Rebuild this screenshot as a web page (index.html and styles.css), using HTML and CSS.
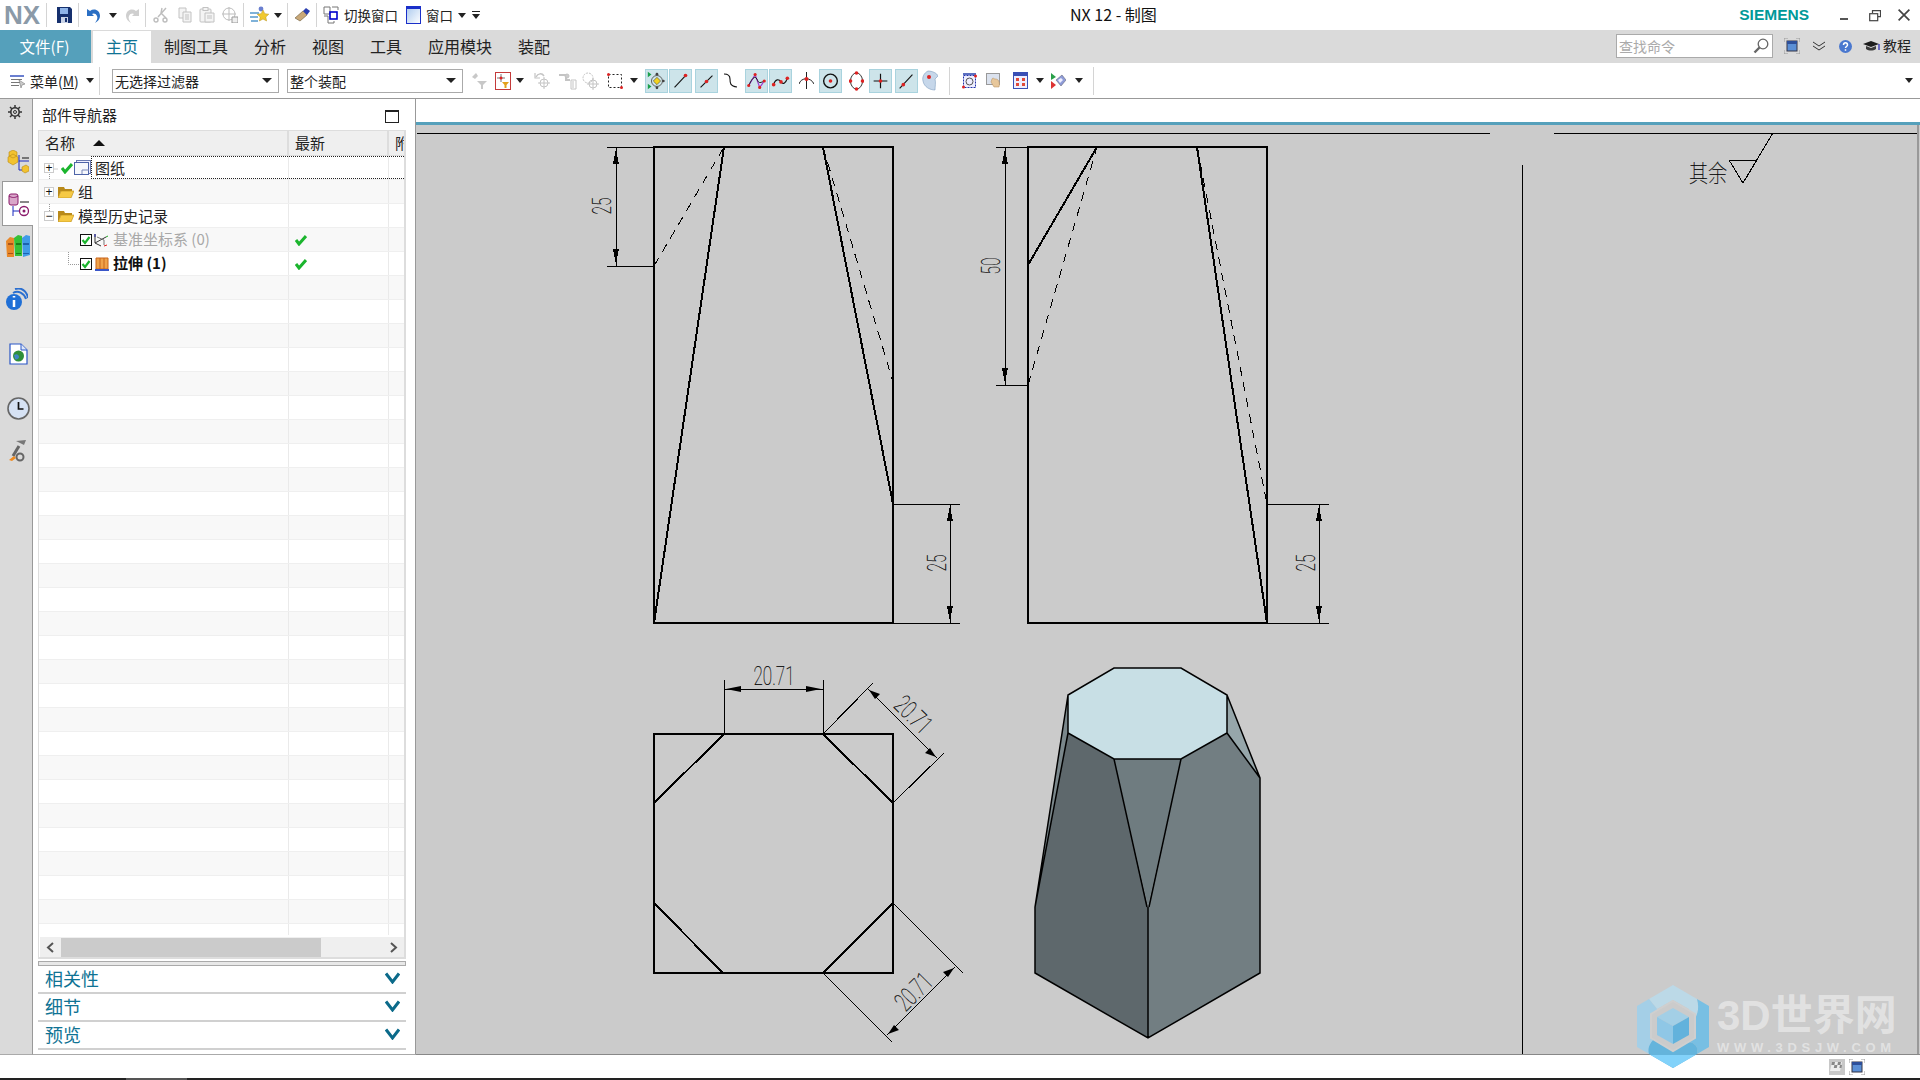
FILE: index.html
```html
<!DOCTYPE html>
<html lang="zh-CN">
<head>
<meta charset="utf-8">
<title>NX 12 - 制图</title>
<link rel="stylesheet" href="styles.css">
</head>
<body>
<div class="app">
  <header class="titlebar">
    <span class="nx-logo">NX</span>
    <i class="sep m6"></i>
    <svg class="ic m10" width="15" height="16" viewBox="0 0 15 16"><path d="M0 0h13l2 2v14H0z" fill="#16306e"/><path d="M3 1h8v6H3z" fill="#8fb4e8"/><path d="M4 10h7v6H4z" fill="#c9d3e6"/><path d="M8 11h2v4H8z" fill="#16306e"/></svg>
    <i class="sep m6"></i>
    <svg class="ic m8" width="14" height="15" viewBox="0 0 14 15"><path d="M3 3 C7 0 13 2 13 8 C13 11 11 13 8 15 C10 12 11 10 10 8 C9 5 6 5 5 6 L7 8 H0 V1 Z" fill="#2a6fc4"/></svg>
    <i class="caret m8"></i>
    <svg class="ic m8" width="14" height="15" viewBox="0 0 14 15"><path d="M11 3 C7 0 1 2 1 8 C1 11 3 13 6 15 C4 12 3 10 4 8 C5 5 8 5 9 6 L7 8 H14 V1 Z" fill="#cfcfcf"/></svg>
    <i class="sep m6"></i>
    <svg class="ic m7" width="15" height="16" viewBox="0 0 15 16" fill="none" stroke="#bdbdbd" stroke-width="1.4"><path d="M13 1 5 10M9 1l-1 5 5 5"/><circle cx="3" cy="13" r="2"/><circle cx="12" cy="13" r="2" /></svg>
    <svg class="ic m10" width="14" height="16" viewBox="0 0 14 16" fill="#f4f4f4" stroke="#c2c2c2"><path d="M1 1h7v10H1z"/><path d="M5 5h8v10H5z"/><path d="M7 8h4M7 10h4M7 12h4"/></svg>
    <svg class="ic m7" width="16" height="16" viewBox="0 0 16 16" fill="#f4f4f4" stroke="#c2c2c2"><rect x="1" y="2" width="11" height="13" rx="1"/><rect x="4" y="0.5" width="5" height="3"/><path d="M6 6h9v9H6z"/><path d="M8 9h5M8 11h5"/></svg>
    <svg class="ic m7" width="16" height="16" viewBox="0 0 16 16" fill="none" stroke="#bdbdbd"><circle cx="7" cy="7" r="6"/><path d="M7 0v14M0 7h14"/><path d="M10 10h6v6h-6z" fill="#eee" stroke="#999"/></svg>
    <i class="sep m5"></i>
    <svg class="ic m6" width="19" height="18" viewBox="0 0 19 18"><circle cx="11" cy="3" r="2.4" fill="#6a7fd0"/><path d="M0 6h9v2H0zM0 10h8v2H0zM1 14h7v2H1z" fill="#7fb2d9"/><path d="M13 4l1.8 3.7 4 .5-3 2.8.8 4-3.6-2-3.6 2 .8-4-3-2.8 4-.5z" fill="#f1c92f" stroke="#b9951c" stroke-width=".5"/></svg>
    <i class="caret m5"></i>
    <i class="sep m5"></i>
    <svg class="ic m6" width="16" height="14" viewBox="0 0 16 14"><path d="M1 10 9 3l4 4-7 6z" fill="#c9a878" stroke="#6b5a3a" stroke-width=".6"/><path d="M9 3l3-3 4 3-3 4z" fill="#2b3fb0"/></svg>
    <i class="sep m6"></i>
    <svg class="ic m6" width="18" height="18" viewBox="0 0 18 18" fill="none"><path d="M1 1h6v7H1zM9 1h6v3M1 10h4v7h6v-2" stroke="#777"/><rect x="7" y="6" width="7" height="7" stroke="#00c" stroke-width="1.6" fill="#fff"/></svg>
    <span class="qa-label m3">切换窗口</span>
    <svg class="ic m8" width="15" height="18" viewBox="0 0 15 18"><defs><linearGradient id="winfill" x1="0" y1="0" x2="1" y2="1"><stop offset="0" stop-color="#a9c8ee"/><stop offset="1" stop-color="#fff"/></linearGradient></defs><rect x=".5" y=".5" width="14" height="17" fill="url(#winfill)" stroke="#1a2fc9"/><path d="M1 1h13v2H1z" fill="#1a2fc9"/></svg>
    <span class="qa-label m5">窗口</span>
    <i class="caret m5"></i>
    <svg class="ic m6" width="8" height="8" viewBox="0 0 8 8"><path d="M0 0h8v1H0zM0 3h8L4 8z" fill="#222"/></svg>
    <span class="app-title">NX 12 - 制图</span>
    <span class="siemens">SIEMENS</span>
    <svg class="ic win-min" width="9" height="3" viewBox="0 0 9 3"><path d="M0 0h8v2H0z" fill="#555"/></svg>
    <svg class="ic win-res" width="12" height="12" viewBox="0 0 12 12" fill="none" stroke="#444" stroke-width="1.2"><path d="M3.5 3V.7h8v6H9"/><rect x=".7" y="3.7" width="8" height="7"/></svg>
    <svg class="ic win-close" width="12" height="12" viewBox="0 0 12 12" stroke="#444" stroke-width="1.7"><path d="M.6.6l10.8 10.8M11.4.6.6 11.4"/></svg>
  </header>

  <nav class="tabs">
    <a class="tab tab-file">文件(F)</a>
    <a class="tab tab-active">主页</a>
    <a class="tab">制图工具</a>
    <a class="tab">分析</a>
    <a class="tab">视图</a>
    <a class="tab">工具</a>
    <a class="tab">应用模块</a>
    <a class="tab">装配</a>
    <div class="tabs-right">
      <div class="search"><span>查找命令</span>
        <svg width="16" height="16" viewBox="0 0 16 16" fill="none" stroke="#666"><circle cx="10" cy="6" r="4.8" stroke-width="1.3"/><path d="M6.5 9.5 1.5 14.5" stroke-width="2.4"/></svg>
      </div>
      <svg class="m11" width="16" height="16" viewBox="0 0 16 16" fill="none"><path d="M0 4V0h4M12 0h4v4M16 12v4h-4M4 16H0v-4" stroke="#999"/><rect x="3" y="3" width="10" height="10" fill="#5b8fd6" stroke="#334"/><path d="M3 3h10v3H3z" fill="#2d4f9a"/></svg>
      <svg class="m12" width="14" height="10" viewBox="0 0 14 10" fill="none" stroke="#333" stroke-width="1"><path d="M1 1l6 4 6-4M1 5l6 4 6-4"/></svg>
      <svg class="m13" width="13" height="13" viewBox="0 0 13 13"><circle cx="6.5" cy="6.5" r="6.5" fill="#4a78cf"/><path d="M4.5 5c0-3 4-3 4 0 0 1.500-2 1.500-2 3M6.500 9.300v1.500" stroke="#fff" stroke-width="1.500" fill="none"/></svg>
      <svg class="m11" width="17" height="12" viewBox="0 0 17 12"><path d="M0 4l8-3 8 3-8 3z" fill="#1c1c1c"/><path d="M3 6v3c3 2 7 2 10 0V6L8 8z" fill="#3a3a3a"/><path d="M16 4v6" stroke="#00a" stroke-width="1"/></svg>
      <span class="tutorial">教程</span>
    </div>
  </nav>

  <section class="toolbar">
    <svg class="ic m10" width="16" height="14" viewBox="0 0 16 14"><path d="M0 1h14v2H0z" fill="#6a7fd0"/><path d="M1 5h11v1H1zM1 8h9v1H1zM1 11h8v1H1z" fill="#777"/><path d="M9 6l6 4-3 1-1 3z" fill="#ccc" stroke="#666" stroke-width=".5"/></svg>
    <span class="menu-label m4">菜单(<u>M</u>)</span>
    <i class="caret m4"></i>
    <i class="sep sep-tall m5"></i>
    <div class="select select-a m12"><span>无选择过滤器</span><i class="caret caret-lg"></i></div>
    <div class="select select-b m8"><span>整个装配</span><i class="caret caret-lg"></i></div>
    <svg class="ic m8" width="17" height="18" viewBox="0 0 17 18" fill="#c8c8c8"><path d="M1 5l4-4 2 3-3 3z"/><path d="M6 9h10l-4 4v4h-2v-4z"/></svg>
    <svg class="ic m7" width="16" height="18" viewBox="0 0 16 18" fill="none"><rect x=".5" y=".5" width="15" height="17" stroke="#c43a3a" fill="#fff"/><path d="M6 2v8M2 6h8" stroke="#777"/><circle cx="6" cy="6" r="1.500" fill="#d22"/><path d="M7 10h7l-2.500 3v3h-2v-3z" fill="#e3a11a"/></svg>
    <i class="caret m5"></i>
    <svg class="ic m9" width="20" height="18" viewBox="0 0 20 18" fill="none" stroke="#c4c4c4"><path d="M3 5c2-4 6-4 8-1" stroke-width="1.500"/><path d="M2 1v5h5" stroke-width="1.200"/><circle cx="11" cy="11" r="4"/><path d="M11 5v12M5 11h12"/></svg>
    <svg class="ic m5" width="20" height="18" viewBox="0 0 20 18" fill="none" stroke="#c4c4c4"><path d="M1 3h7v5h4" stroke-width="2"/><circle cx="9" cy="4" r="2" fill="#ccc"/><path d="M13 8h5v9h-5zM15 9v7"/></svg>
    <svg class="ic m4" width="18" height="18" viewBox="0 0 18 18" fill="none" stroke="#c4c4c4"><circle cx="6" cy="6" r="5" stroke-dasharray="2 1"/><circle cx="11" cy="12" r="4"/><path d="M11 6v12M5 12h12"/></svg>
    <svg class="ic m7" width="16" height="18" viewBox="0 0 16 18" fill="none"><rect x="1.500" y="2.500" width="13" height="13" stroke="#222" stroke-dasharray="2 2"/><circle cx="1.500" cy="2.500" r="1.500" fill="#d22"/><circle cx="14.500" cy="15.500" r="1.500" fill="#d22"/></svg>
    <i class="caret m7"></i>
    <svg class="ic on m7" width="23" height="24" viewBox="0 0 23 24" fill="none"><path d="M2 2l4 3-4 3zM2 15l4 3-4 3z" fill="#1aa04a"/><circle cx="12" cy="12" r="6" stroke="#555"/><path d="M12 8l4 4-4 4-4-4z" fill="#f2d21f" stroke="#333" stroke-width=".6"/><circle cx="12" cy="4.500" r="1.500" fill="#444"/><circle cx="12" cy="19.500" r="1.500" fill="#444"/><circle cx="19" cy="12" r="1.500" fill="#444"/></svg>
    <svg class="ic on m1" width="23" height="24" viewBox="0 0 23 24" fill="none"><path d="M5 19 17 6" stroke="#111" stroke-width="1.200"/><circle cx="17" cy="6" r="2" fill="#d22"/></svg>
    <svg class="ic on m3" width="23" height="24" viewBox="0 0 23 24" fill="none"><path d="M5 19 18 6" stroke="#111" stroke-width="1.200"/><circle cx="11.500" cy="12.500" r="2" fill="#d22"/></svg>
    <svg class="ic m5" width="15" height="24" viewBox="0 0 15 24" fill="none"><path d="M1 5c4 0 6 1 6 5s0 7 7 8" stroke="#111" stroke-width="1.100"/></svg>
    <svg class="ic on m7" width="23" height="24" viewBox="0 0 23 24" fill="none"><path d="M3 17l7-12 5 14 5-7" stroke="#a23ad0" stroke-width="1.300"/><path d="M3 17C7 8 10 6 12 10s2 5 8 2" stroke="#111"/><circle cx="3" cy="17" r="1.700" fill="#d22"/><circle cx="10" cy="5" r="1.700" fill="#d22"/><circle cx="15" cy="19" r="1.700" fill="#d22"/><circle cx="20" cy="12" r="1.700" fill="#d22"/></svg>
    <svg class="ic on m1" width="23" height="24" viewBox="0 0 23 24" fill="none"><path d="M4 16c2-7 6-6 8-3s5 2 7-4" stroke="#111" stroke-width="1.200"/><circle cx="4" cy="16" r="2" fill="#d22"/><circle cx="12" cy="13" r="2" fill="#d22"/><circle cx="19" cy="9" r="2" fill="#d22"/></svg>
    <svg class="ic m7" width="15" height="24" viewBox="0 0 15 24" fill="none"><path d="M7.500 3v17" stroke="#222"/><path d="M0 15C2 8 12 8 15 15" stroke="#222"/><circle cx="7.500" cy="10" r="2" fill="#d22"/></svg>
    <svg class="ic on m5" width="23" height="24" viewBox="0 0 23 24" fill="none"><circle cx="11.500" cy="12" r="7.500" stroke="#111" stroke-width="1.500"/><circle cx="11.500" cy="12" r="2" fill="#d22"/></svg>
    <svg class="ic m7" width="15" height="24" viewBox="0 0 15 24" fill="none"><ellipse cx="7.500" cy="12" rx="6" ry="8" stroke="#333"/><circle cx="7.500" cy="4" r="1.800" fill="#d22"/><circle cx="7.500" cy="20" r="1.800" fill="#d22"/><circle cx="1.500" cy="12" r="1.800" fill="#d22"/><circle cx="13.500" cy="12" r="1.800" fill="#d22"/></svg>
    <svg class="ic on m5" width="23" height="24" viewBox="0 0 23 24" fill="none"><path d="M11.500 4v16M4 12h15" stroke="#111" stroke-width="1.300"/><circle cx="11.500" cy="12" r="2" fill="#d22"/></svg>
    <svg class="ic on m3" width="23" height="24" viewBox="0 0 23 24" fill="none"><path d="M4 20 18 5" stroke="#111" stroke-width="1.200"/><circle cx="8" cy="16" r="2" fill="#d22"/></svg>
    <svg class="ic m4" width="16" height="24" viewBox="0 0 16 24"><path d="M6 2c4 0 9 2 10 5l-3 3c1 4 0 7 0 11C8 21 2 18 1 12 0 8 2 4 6 2z" fill="#c6d7ea" stroke="#7f9dc0" stroke-width=".6"/><circle cx="7" cy="8" r="2" fill="#d22"/></svg>
    <i class="sep sep-tall m11"></i>
    <svg class="ic m12" width="15" height="17" viewBox="0 0 15 17" fill="none"><path d="M1 1h13v2H1z" fill="#5b6fc0"/><rect x="1.500" y="3.500" width="12" height="12" stroke="#2233aa" stroke-dasharray="2 1" fill="#eef"/><circle cx="7.500" cy="9.500" r="3.500" stroke="#555"/><circle cx="1.500" cy="15" r="1.500" fill="#d22"/><circle cx="13.500" cy="4" r="1.500" fill="#d22"/></svg>
    <svg class="ic m9" width="15" height="17" viewBox="0 0 15 17"><rect x=".5" y="1.500" width="13" height="11" fill="#dbe2ee" stroke="#999"/><path d="M6 7c1-2 2 0 3 0s2 0 3 1 2 4 1 7H8L5 10z" fill="#e7c79b" stroke="#b08a5a" stroke-width=".5"/></svg>
    <svg class="ic m12" width="15" height="17" viewBox="0 0 15 17"><rect x=".5" y=".5" width="14" height="16" fill="#eef" stroke="#3a4fb5"/><path d="M1 1h13v3H1z" fill="#3a4fb5"/><path d="M3 6h3v3H3zM9 6h3v3H9zM3 11h3v3H3zM9 11h3v3H9z" fill="#e04a3a"/></svg>
    <i class="caret m8"></i>
    <svg class="ic m7" width="15" height="17" viewBox="0 0 15 17"><path d="M0 1l5 4-5 3z" fill="#2aa04a"/><path d="M0 9l5 4-5 4z" fill="#d33"/><path d="M5 8l6-5 4 5-5 6z" fill="#8e9cd8" stroke="#556" stroke-width=".5"/><path d="M7 8l3-2 2 2-3 3z" fill="#eef"/></svg>
    <i class="caret m9"></i>
    <i class="sep sep-tall m10"></i>
    <i class="caret caret-end"></i>
  </section>

  <main class="workspace">
    <aside class="rail">
      <svg class="rail-gear" width="14" height="14" viewBox="0 0 14 14" fill="none" stroke="#333"><circle cx="7" cy="7" r="4.200" stroke-width="1.600"/><circle cx="7" cy="7" r="1.500"/><path d="M7 0v2.500M7 11.500V14M0 7h2.500M11.500 7H14M2 2l1.800 1.800M10.200 10.200 12 12M2 12l1.800-1.800M10.200 3.800 12 2" stroke-width="1.500"/></svg>
      <svg class="rail-parts" width="22" height="24" viewBox="0 0 22 24" fill="none"><path d="M1 7l5-3 5 3v5l-5 3-5-3zM6 0l4 2v4L6 8 2 6V2z" fill="#f2c230" stroke="#b98a16" stroke-width=".6"/><path d="M12 5v15M12 11h10M12 20h4" stroke="#1a2abf"/><path d="M15 8h7" stroke="#111"/><path d="M15 17l4-2 3 2v4l-4 2-3-2z" fill="#f2c230" stroke="#b98a16" stroke-width=".6"/></svg>
      <div class="rail-tab">
        <svg width="22" height="24" viewBox="0 0 22 24" fill="none"><rect x="1" y="1" width="9" height="11" rx="2" fill="#d9a6c9" stroke="#8a1a6b"/><path d="M1 3c3 2 6 2 9 0" stroke="#8a1a6b"/><path d="M12 9h9" stroke="#111"/><path d="M5 13v10M5 18h7" stroke="#1a2abf"/><circle cx="16" cy="18" r="4.500" stroke="#8a1a6b" stroke-width="1.300"/><circle cx="16" cy="18" r="1.500" fill="#8a1a6b"/></svg>
      </div>
      <svg class="rail-books" width="24" height="23" viewBox="0 0 24 23"><path d="M0 6l4-4 4 1v19H1z" fill="#e8882a"/><path d="M2 8h5v2H2zM2 18h5v1H2z" fill="#a8541a"/><path d="M8 3l4-3 4 1v20H9z" fill="#35c035"/><path d="M10 8h5v2h-5zM10 18h5v1h-5z" fill="#1a7f1a"/><path d="M16 3l4-3 4 1v19l-7 2z" fill="#3f9be8"/><path d="M17 8h6v2h-6zM17 18h6v1h-6z" fill="#1c62b0"/></svg>
      <svg class="rail-info" width="22" height="24" viewBox="0 0 22 24" fill="none"><path d="M7 5c5-3 11 0 13 6M9 1c6-2 12 2 13 9" stroke="#2a6fd0" stroke-width="2"/><circle cx="8" cy="14" r="8" fill="#1f6fd6"/><path d="M8 8v1.500M8 12v7" stroke="#fff" stroke-width="2.500"/></svg>
      <svg class="rail-doc" width="19" height="22" viewBox="0 0 19 22"><path d="M1 1h11l6 6v14H1z" fill="#fff" stroke="#2a56c6" stroke-width="1.200"/><path d="M12 1v6h6" fill="#dfe8f8" stroke="#2a56c6"/><circle cx="9.500" cy="13" r="5.500" fill="#2f8f3a"/><path d="M5 12c3-2 5 0 5 2s-3 3-4 2" fill="#3f86c6"/></svg>
      <svg class="rail-clock" width="23" height="23" viewBox="0 0 23 23" fill="none"><circle cx="11.500" cy="11.500" r="10.500" fill="#d6e2f4" stroke="#666" stroke-width="1.600"/><path d="M11.500 5v7h5" stroke="#111" stroke-width="1.700"/></svg>
      <svg class="rail-tools" width="20" height="24" viewBox="0 0 20 24" fill="none"><path d="M11 8 5 18" stroke="#666" stroke-width="3"/><path d="M8 3l10-1-2 5z" fill="#777"/><circle cx="12" cy="19" r="3.500" stroke="#666" stroke-width="2"/><path d="M1 22l5-4 2 2-4 3z" fill="#ef8a1f"/></svg>
    </aside>

    <div class="panel">
      <div class="panel-head"><span>部件导航器</span><i class="maximize"></i></div>
      <div class="table">
        <div class="thead">
          <div class="th"><span>名称</span><i class="sort"></i></div>
          <div class="th">最新</div>
          <div class="th th-clip">附</div>
        </div>
        <div class="tbody">
          <svg class="tree-lines" width="60" height="115" viewBox="0 0 60 115" fill="none" stroke="#999" stroke-dasharray="1 1"><path d="M10.500 18V62M10.500 13H19M29.500 72V108.500H40M29.500 84.500H40"/></svg>
          <div class="row row-top">
            <i class="box m5">+</i>
            <svg class="m7" width="12" height="12" viewBox="0 0 12 12"><path d="M1 6l3 4 7-8" fill="none" stroke="#1bb52e" stroke-width="3"/></svg>
            <svg class="m1" width="17" height="15" viewBox="0 0 17 15"><rect x="2.500" y=".5" width="14" height="13" fill="#eef" stroke="#6a7ab0"/><rect x=".5" y="2.500" width="14" height="12" fill="#f6f8fc" stroke="#4e64a8"/><path d="M8 14v-4h7" stroke="#7a88b8" fill="none"/></svg>
            <span class="focus">图纸</span>
          </div>
          <div class="row">
            <i class="box m5">+</i>
            <svg class="m4 folder" width="16" height="12" viewBox="0 0 16 12"><path d="M0 1h6l1 2h7v2H3l-3 7z" fill="#b98a1a"/><path d="M3 5h13l-3 7H0z" fill="#f6c945" stroke="#b98a1a" stroke-width=".6"/></svg>
            <span class="cell-text m4">组</span>
          </div>
          <div class="row">
            <i class="box m5">−</i>
            <svg class="m4 folder" width="16" height="12" viewBox="0 0 16 12"><path d="M0 1h6l1 2h7v2H3l-3 7z" fill="#b98a1a"/><path d="M3 5h13l-3 7H0z" fill="#f6c945" stroke="#b98a1a" stroke-width=".6"/></svg>
            <span class="cell-text m4">模型历史记录</span>
          </div>
          <div class="row">
            <svg class="check-box" width="12" height="12" viewBox="0 0 12 12"><rect x=".5" y=".5" width="11" height="11" fill="#fff" stroke="#111"/><path d="M2.500 6l2.500 3 4.500-6" fill="none" stroke="#1bb52e" stroke-width="2.200"/></svg>
            <svg class="m2" width="15" height="15" viewBox="0 0 15 15" fill="none"><path d="M1 2v9l6 3M1 11l11-6" stroke="#333"/><path d="M1 2l0 3" stroke="#22a"/><path d="M10 14l3-1" stroke="#d22"/><path d="M12 5l2-1" stroke="#2a2"/><path d="M3 5l7 3v5" stroke="#777"/></svg>
            <span class="cell-text m4 dim">基准坐标系 (0)</span>
            <svg class="latest" width="12" height="12" viewBox="0 0 12 12"><path d="M1 6l3 4 7-8" fill="none" stroke="#1bb52e" stroke-width="3"/></svg>
          </div>
          <div class="row">
            <svg class="check-box" width="12" height="12" viewBox="0 0 12 12"><rect x=".5" y=".5" width="11" height="11" fill="#fff" stroke="#111"/><path d="M2.500 6l2.500 3 4.500-6" fill="none" stroke="#1bb52e" stroke-width="2.200"/></svg>
            <svg class="m3" width="14" height="14" viewBox="0 0 14 14"><path d="M1 1h12v11H1z" fill="#f0a24a" stroke="#c8641a"/><path d="M5 1v11M9 1v11" stroke="#c8641a"/><path d="M0 12h14v2H0z" fill="#3a56c8"/></svg>
            <span class="cell-text m4 strong">拉伸 (1)</span>
            <svg class="latest" width="12" height="12" viewBox="0 0 12 12"><path d="M1 6l3 4 7-8" fill="none" stroke="#1bb52e" stroke-width="3"/></svg>
          </div>
          <div class="row"></div><div class="row"></div><div class="row"></div><div class="row"></div><div class="row"></div><div class="row"></div><div class="row"></div>
          <div class="row"></div><div class="row"></div><div class="row"></div><div class="row"></div><div class="row"></div><div class="row"></div><div class="row"></div>
          <div class="row"></div><div class="row"></div><div class="row"></div><div class="row"></div><div class="row"></div><div class="row"></div><div class="row"></div>
          <div class="row"></div><div class="row"></div><div class="row"></div><div class="row"></div><div class="row"></div><div class="row"></div><div class="row"></div>
        </div>
        <div class="hscroll">
          <svg width="21" height="19" viewBox="0 0 21 19" fill="none" stroke="#555" stroke-width="2"><path d="M13 5 8 9.500 13 14"/></svg>
          <div class="thumb"></div>
          <svg class="scroll-next" width="21" height="19" viewBox="0 0 21 19" fill="none" stroke="#555" stroke-width="2"><path d="M8 5l5 4.500L8 14"/></svg>
        </div>
      </div>
      <div class="splitter"></div>
      <div class="acc"><span>相关性</span><svg width="15" height="12" viewBox="0 0 15 12" fill="none" stroke="#0b6a8a" stroke-width="3"><path d="M1 1.500 7.500 10 14 1.500"/></svg></div>
      <div class="acc"><span>细节</span><svg width="15" height="12" viewBox="0 0 15 12" fill="none" stroke="#0b6a8a" stroke-width="3"><path d="M1 1.500 7.500 10 14 1.500"/></svg></div>
      <div class="acc"><span>预览</span><svg width="15" height="12" viewBox="0 0 15 12" fill="none" stroke="#0b6a8a" stroke-width="3"><path d="M1 1.500 7.500 10 14 1.500"/></svg></div>
    </div>

    <div class="viewport">
      <div class="view-strip"></div>
      <svg class="sheet" width="1504" height="930" viewBox="416 125 1504 930" fill="none" stroke="#000" shape-rendering="crispEdges">
        <path d="M417 133H1490M1554 133H1917M1522 165V1054"/>
        <path stroke="#999" stroke-width="2" d="M1918 125V1055"/>
        <path stroke="#888" d="M416 1054.500H1920"/>

        <path stroke-width="2" d="M654 147H893V623H654ZM654 623 724 147M823 147 893 504"/>
        <path stroke-dasharray="9 7" d="M654 266 724 147M823 147 893 382"/>
        <path d="M607 147H654M607 266H654M616 147V266M893 504H960M893 623H960M950 504V623"/>
        <path fill="#000" stroke="none" d="M616 149l-3 15h6zM616 264l-3-15h6zM950 506l-3 15h6zM950 621l-3-15h6z"/>

        <path stroke-width="2" d="M1028 147H1267V623H1028ZM1028 265 1097 147M1197 147 1267 623"/>
        <path stroke-dasharray="9 7" d="M1028 385 1097 147M1197 147 1267 504"/>
        <path d="M996 147H1028M996 385H1028M1005 147V385M1267 504H1329M1267 623H1329M1319 504V623"/>
        <path fill="#000" stroke="none" d="M1005 149l-3 15h6zM1005 383l-3-15h6zM1319 506l-3 15h6zM1319 621l-3-15h6z"/>

        <path stroke-width="2" d="M654 734H893V973H654ZM724 734 654 803M823 734 893 803M654 903 723 973M893 903 823 973"/>
        <path d="M724 680V734M823 680V734M724 689H823M823 734 873 683M893 803 944 753M868 689 937 758M893 903 963 973M823 973 892 1042M955 967 887 1035"/>
        <path fill="#000" stroke="none" d="M726 689l15-3v6zM821 689l-15-3v6zM869 690l11 4-5 5zM936 757l-11-4 5-5zM954 968l-11 4 5 5zM888 1034l11-4-5-5z" shape-rendering="auto"/>

        <g class="dim-text" shape-rendering="auto">
          <text x="611" y="206" text-anchor="middle" textLength="17" lengthAdjust="spacingAndGlyphs" transform="rotate(-90 611 206)">25</text>
          <text x="946" y="563" text-anchor="middle" textLength="17" lengthAdjust="spacingAndGlyphs" transform="rotate(-90 946 563)">25</text>
          <text x="1000" y="266" text-anchor="middle" textLength="17" lengthAdjust="spacingAndGlyphs" transform="rotate(-90 1000 266)">50</text>
          <text x="1315" y="563" text-anchor="middle" textLength="17" lengthAdjust="spacingAndGlyphs" transform="rotate(-90 1315 563)">25</text>
          <text x="774" y="685" text-anchor="middle" textLength="41" lengthAdjust="spacingAndGlyphs">20.71</text>
          <text x="907" y="721" text-anchor="middle" textLength="41" lengthAdjust="spacingAndGlyphs" transform="rotate(45 907 721)">20.71</text>
          <text x="920" y="998" text-anchor="middle" textLength="41" lengthAdjust="spacingAndGlyphs" transform="rotate(-45 920 998)">20.71</text>
          <text class="note" x="1689" y="182" textLength="38" lengthAdjust="spacingAndGlyphs">其余</text>
        </g>
        <path d="M1729 160H1757M1729 160 1743 183M1757 160 1743 183M1743 183 1773 133"/>

        <g shape-rendering="auto" stroke="none">
          <path fill="#5e686c" d="M1068 733 1114 759 1148 907V1038L1035 973V907Z"/>
          <path fill="#727e82" d="M1181 759 1227 733 1260 778V973L1148 1038V907Z"/>
          <path fill="#6f7c80" d="M1114 759H1181L1148 907Z"/>
          <path fill="#96a6aa" d="M1227 695 1260 778 1227 733Z"/>
          <path fill="#7a878b" d="M1068 695V733L1035 907Z"/>
          <path fill="#c8dfe5" d="M1114 668H1181L1227 695V733L1181 759H1114L1068 733V695Z"/>
        </g>
        <path shape-rendering="auto" stroke-width="1.500" d="M1114 668H1181L1227 695V733L1181 759H1114L1068 733V695ZM1068 695 1035 907M1068 733 1035 907V973L1148 1038 1260 973V778L1227 695M1227 733 1260 778M1114 759 1147 907M1181 759 1149 907M1148 907V1038"/>
      </svg>
      <div class="watermark">
        <svg width="72" height="83" viewBox="0 0 72 83">
          <path fill="#bcd9e7" d="M36 0 60 14C63 24 60 34 52 42V24L36 15 20 24 12 14Z"/>
          <path fill="#a4cfe7" d="M0 21 12 14 20 24V52L12 69 0 62Z"/>
          <path fill="#78bfe3" d="M60 14 72 21V62L60 69C62 60 56 58 52 57V42C60 34 63 24 60 14Z"/>
          <path fill="#64b4dc" d="M20 52 36 60 52 57C58 58 62 62 60 69L36 83 12 69C10 62 14 56 20 52Z"/>
          <path fill="#82d2fa" d="M13.500 70H58.500L36 83Z"/>
          <path fill="#cbcbcb" stroke="#cfcfcf" stroke-width="2" d="M36 16 58 29V53L36 66 14 53V29Z"/>
          <path fill="#a3cfe6" d="M36 23 52 32 36 41 20 32Z"/>
          <path fill="#8fc7e6" d="M20 32 36 41V59L20 50Z"/>
          <path fill="#62b2dc" d="M52 32V50L36 59V41Z"/>
        </svg>
        <div class="wm-text"><strong>3D世界网</strong><small>WWW.3DSJW.COM</small></div>
      </div>
    </div>
  </main>

  <footer class="status">
    <svg width="16" height="16" viewBox="0 0 16 16"><rect width="16" height="16" fill="#c8c8c8"/><path d="M3 3h10l-2 9H1z" fill="#eee"/><path d="M3 3h3l-.6 3H2.400zM9 3h3l-.6 3H8.400zM5.400 6h3l-.6 3h-3zM11 6h2l-.6 3h-2z" fill="#888"/></svg>
    <svg class="m4" width="16" height="16" viewBox="0 0 16 16" fill="none"><path d="M0 4V0h4M12 0h4v4M16 12v4h-4M4 16H0v-4" stroke="#999"/><rect x="3" y="3" width="10" height="10" fill="#5b8fd6" stroke="#334"/><path d="M3 3h10v3H3z" fill="#2d4f9a"/></svg>
  </footer>
  <div class="taskbar"><i></i></div>
</div>
</body>
</html>
```

FILE: styles.css
```css
* { box-sizing: border-box; }
html, body { margin: 0; height: 100%; }
body {
  overflow: hidden;
  background: #fff;
  color: #222;
  font: 14px/20px "Noto Sans CJK SC", "Noto Sans", sans-serif;
}
i { display: block; font-style: normal; }
svg { display: block; flex: none; }

.app { width: 1920px; height: 1080px; display: flex; flex-direction: column; position: relative; }

.m1 { margin-left: 1px; } .m2 { margin-left: 2px; } .m3 { margin-left: 3px; }
.m4 { margin-left: 4px; } .m5 { margin-left: 5px; } .m6 { margin-left: 6px; }
.m7 { margin-left: 7px; } .m8 { margin-left: 8px; } .m9 { margin-left: 9px; }
.m10 { margin-left: 10px; } .m11 { margin-left: 11px; } .m12 { margin-left: 12px; }
.m13 { margin-left: 13px; }

.sep { width: 1px; height: 24px; background: #d4d4d4; flex: none; }
.sep-tall { height: 28px; }
.caret { width: 0; height: 0; flex: none; border: 4px solid transparent; border-top: 5px solid #222; border-bottom: 0; }
.caret-lg { border-width: 5px 5px 0; margin-left: auto; }

/* title bar */
.titlebar { height: 30px; flex: none; display: flex; align-items: center; padding-left: 4px; }
.nx-logo { width: 36px; font: bold 26px/30px "Liberation Sans", sans-serif; color: #8b9aa8; }
.qa-label { font-size: 13.5px; white-space: nowrap; }
.app-title { margin-left: 590px; padding-bottom: 2px; font-size: 16px; white-space: nowrap; color: #111; }
.siemens { margin-left: auto; font: bold 15.500px/20px "Liberation Sans", sans-serif; color: #009999; }
.win-min { margin: 8px 0 0 31px; }
.win-res { margin: 2px 0 0 20px; }
.win-close { margin: 0 10px 0 17px; }

/* ribbon tabs */
.tabs { height: 33px; flex: none; display: flex; align-items: stretch; background: #dadada; }
.tab { padding: 0 13px; font-size: 16px; line-height: 32px; color: #222; white-space: nowrap; }
.tab-file { width: 91px; padding: 0 2px 0 0; margin-right: 2px; text-align: center; color: #fff; background: #55a0bb; font-size: 15.500px; }
.tab-active { margin-top: 1px; line-height: 30px; background: #fff; color: #0f7394; }
.tabs-right { margin-left: auto; padding-bottom: 1px; display: flex; align-items: center; }
.search { width: 157px; height: 24px; display: flex; align-items: center; justify-content: space-between; padding: 0 3px 0 2px; background: #fff; border: 1px solid #aaa; color: #aaa; }
.tutorial { margin: 0 9px 2px 3px; }

/* toolbar */
.toolbar { height: 36px; flex: none; display: flex; align-items: center; background: #fff; border-bottom: 1px solid #999; }
.menu-label { width: 52px; white-space: nowrap; }
.select { height: 24px; display: flex; align-items: center; padding: 0 6px 0 2px; border: 1px solid #aaa; }
.select-a { width: 167px; }
.select-b { width: 176px; }
.on { background: #cde4ea; border: 1px solid #a9d3de; }
.caret-end { margin-left: auto; margin-right: 7px; }

/* workspace */
.workspace { flex: 1; min-height: 0; display: flex; }

.rail { width: 33px; flex: none; display: flex; flex-direction: column; background: #dadada; border-right: 1px solid #999; border-bottom: 1px solid #aaa; }
.rail-gear { margin: 6px 0 0 8px; }
.rail-parts { margin: 31px 0 0 7px; }
.rail-tab { width: 31px; height: 45px; margin: 7px 0 0 2px; padding: 11px 0 0 5px; background: #fff; border: 1px solid #999; border-right: 0; }
.rail-books { margin: 9px 0 0 6px; }
.rail-info { margin: 30px 0 0 6px; }
.rail-doc { margin: 31px 0 0 9px; }
.rail-clock { margin: 32px 0 0 7px; }
.rail-tools { margin: 18px 0 0 8px; }

.panel { width: 383px; flex: none; display: flex; flex-direction: column; padding: 0 9px 0 5px; background: #fff; border-right: 1px solid #999; border-bottom: 1px solid #aaa; }
.panel-head { height: 31px; flex: none; display: flex; align-items: center; justify-content: space-between; padding: 1px 7px 0 4px; font-size: 15px; }
.maximize { width: 14px; height: 13px; border: 1px solid #222; border-top-width: 2px; margin-top: 2px; }

.table { height: 829px; flex: none; display: flex; flex-direction: column; border: 1px solid #ddd; border-width: 1px 2px 2px 1px; overflow: hidden; }
.thead { height: 25px; flex: none; display: grid; grid-template-columns: 250px 100px 1fr; background: #efefef; border-bottom: 1px solid #ddd; font-size: 15px; }
.th { display: flex; align-items: center; padding-left: 6px; border-right: 2px solid #ddd; }
.th-clip { border: 0; overflow: hidden; white-space: nowrap; }
.sort { width: 0; height: 0; margin-left: 18px; border: 6px solid transparent; border-bottom: 6px solid #111; border-top: 0; }

.tbody { flex: 1; min-height: 0; position: relative; overflow: hidden; }
.tree-lines { position: absolute; left: 0; top: 0; }
.row {
  height: 24px;
  display: flex;
  align-items: center;
  position: relative;
  font-size: 15px;
  border-bottom: 1px solid #efefef;
  background-image: linear-gradient(#eaeaea, #eaeaea), linear-gradient(#eaeaea, #eaeaea);
  background-size: 1px 100%, 1px 100%;
  background-position: 249px 0, 349px 0;
  background-repeat: no-repeat;
}
.row:nth-child(odd) { background-color: #f8f8f8; }
.box { width: 10px; height: 10px; position: relative; z-index: 1; border: 1px solid #ccc; background: #fff; font: 12px/8px "Liberation Sans", sans-serif; text-align: center; color: #111; }
.folder { position: relative; z-index: 1; }
.cell-text { white-space: nowrap; }
.focus { flex: 1; align-self: stretch; padding-left: 3px; line-height: 21px; border: 1px dotted #222; border-right: 0; }
.check-box { margin-left: 41px; position: relative; z-index: 1; }
.dim { color: #a8a8a8; padding-bottom: 2px; }
.strong { font-weight: 700; color: #111; padding-bottom: 2px; }
.latest { position: absolute; left: 256px; top: 6px; }

.hscroll { height: 20px; flex: none; display: flex; align-items: center; background: #efefef; margin: 2px 0 0 1px; }
.thumb { width: 260px; height: 19px; background: #cbcbcb; }
.scroll-next { margin-left: auto; }

.splitter { height: 5px; flex: none; margin: 2px 0 0; background: #e8e8e8; border: 1px solid #aaa; }
.acc { height: 28px; flex: none; display: flex; align-items: center; justify-content: space-between; padding: 0 6px 2px 7px; color: #0f7394; font-size: 18px; border-bottom: 2px solid #d0d0d0; }
.acc svg { margin-top: -1px; }

.viewport { flex: 1; min-width: 0; display: flex; flex-direction: column; position: relative; }
.view-strip { height: 26px; flex: none; background: #fff; border-bottom: 3px solid #55a0bb; }
.sheet { background: #cbcbcb; }

.dim-text text { fill: #000; stroke: #000; stroke-width: .2px; font: 100 26px Roboto, "Liberation Sans", sans-serif; }
.dim-text .note { font: 100 24px "Noto Sans CJK SC", sans-serif; }

.watermark { position: absolute; left: 1221px; top: 886px; display: flex; pointer-events: none; z-index: 2; }
.wm-text { margin: 8px 0 0 8px; display: flex; flex-direction: column; color: rgba(255, 255, 255, .45); }
.wm-text strong { font: 700 42px/46px "Liberation Sans", "Noto Sans CJK SC", sans-serif; white-space: nowrap; }
.wm-text small { margin-top: 2px; font: 700 13px/14px "Liberation Sans", sans-serif; letter-spacing: 4.700px; white-space: nowrap; }

/* status + task bar */
.status { height: 23px; flex: none; display: flex; align-items: center; padding-left: 1829px; background: #fff; }
.taskbar { height: 2px; flex: none; background: #222; }
.taskbar i { width: 61px; height: 2px; margin-left: 126px; background: #555; }
```
